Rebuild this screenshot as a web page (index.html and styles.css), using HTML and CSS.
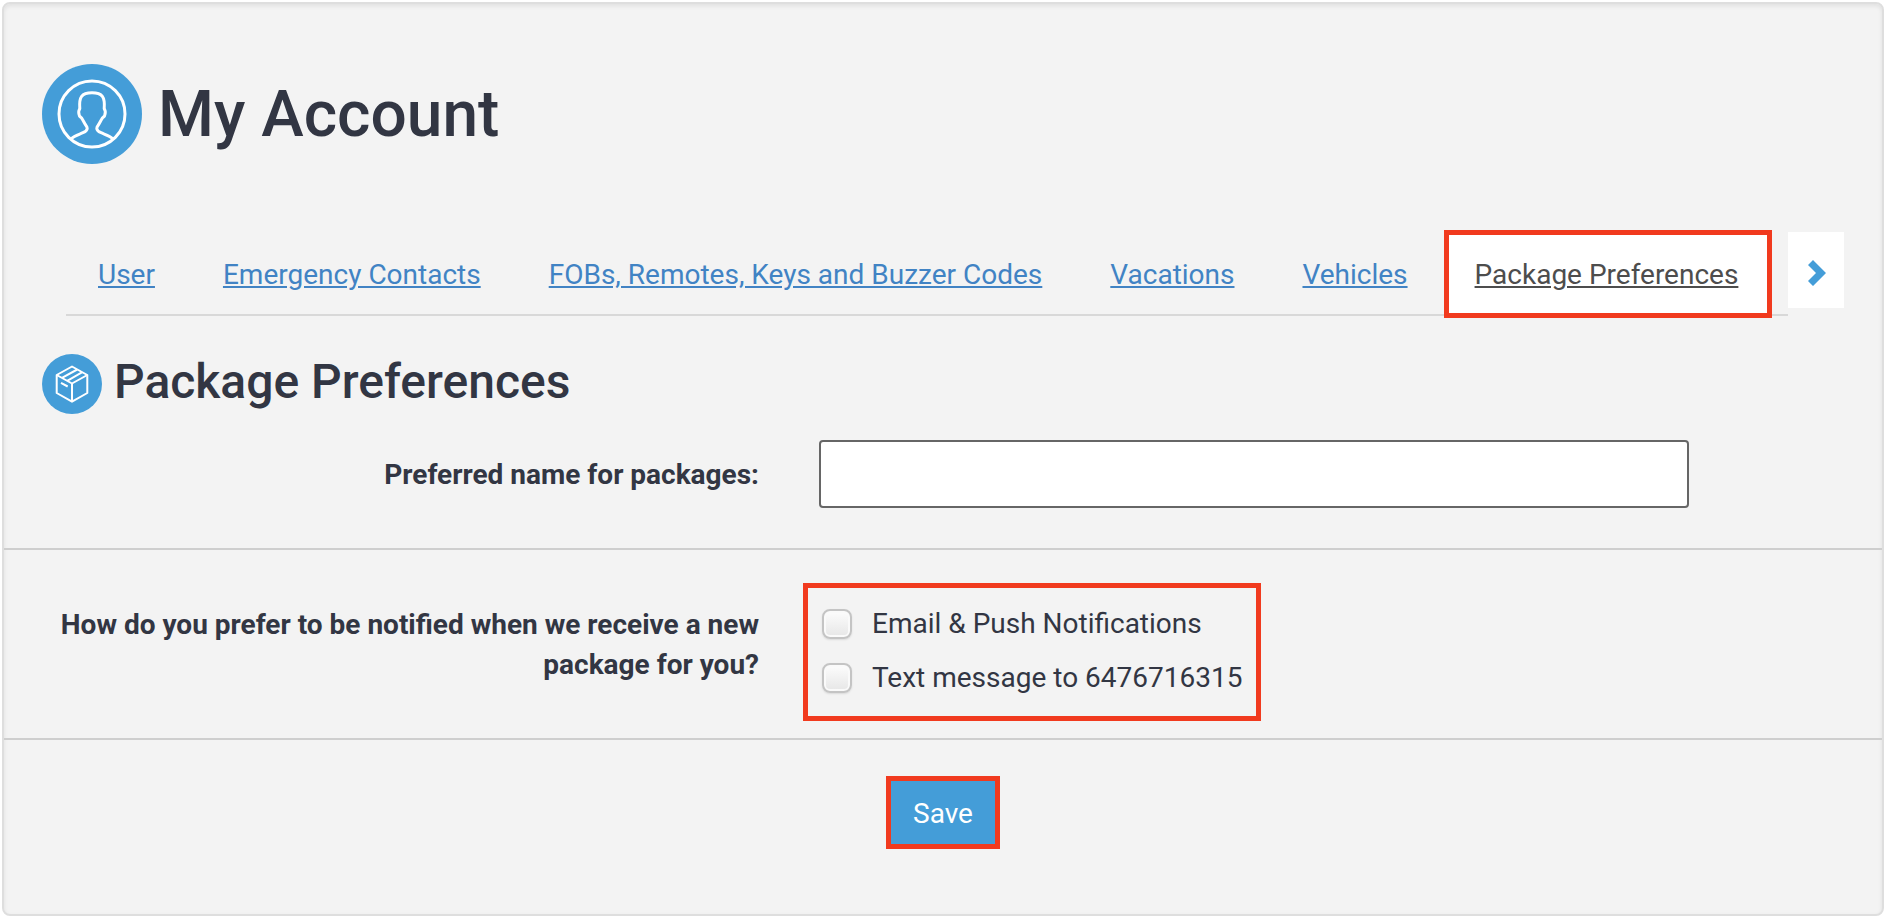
FILE: index.html
```html
<!DOCTYPE html>
<html lang="en">
<head>
  <meta charset="UTF-8">
  <title>My Account - Package Preferences</title>
  <meta name="viewport" content="width=device-width, initial-scale=1">
  <link rel="stylesheet" href="styles.css">
</head>
<body>
  <main class="panel">
    <header class="page-header">
      <svg class="icon-user" viewBox="0 0 100 100" aria-hidden="true">
        <circle class="disc" cx="50" cy="50" r="50"/>
        <g class="lines">
          <circle cx="50" cy="50" r="33"/>
          <path d="M29.500 74.500C32 72 37 70.500 41 68.700C44.500 67.200 45.200 66 45.200 64.500C45.200 63.500 44.800 62.500 44 61.500C42.500 59.500 41.300 56.500 39.500 53.800C37.800 53 36.700 50 36.700 48C36.700 46.500 37.500 45.500 37.800 44.500C36.900 33 39.500 28.800 50 28.800C60.500 28.800 63.100 33 62.200 44.500C62.500 45.500 63.300 46.500 63.300 48C63.300 50 62.200 53 60.500 53.800C58.700 56.500 57.500 59.500 56 61.500C55.200 62.500 54.800 63.500 54.800 64.500C54.800 66 55.500 67.200 59 68.700C63 70.500 68 72 70.500 74.500"/>
        </g>
      </svg>
      <h1>My Account</h1>
    </header>

    <nav class="tabs">
      <ul class="tab-list">
        <li><a href="#user">User</a></li>
        <li><a href="#emergency">Emergency Contacts</a></li>
        <li><a href="#fobs">FOBs, Remotes, Keys and Buzzer Codes</a></li>
        <li><a href="#vacations">Vacations</a></li>
        <li><a href="#vehicles">Vehicles</a></li>
        <li class="active"><a href="#packages">Package Preferences</a></li>
      </ul>
      <button class="tab-next" type="button" aria-label="Next tabs">
        <svg viewBox="0 0 18 26" aria-hidden="true"><path d="M5 0L18 13L5 26L0 21L8 13L0 5Z"/></svg>
      </button>
    </nav>

    <form id="packages">
      <div class="section-header">
        <svg class="icon-package" viewBox="0 0 60 60" aria-hidden="true">
          <circle class="disc" cx="30" cy="30" r="30"/>
          <g class="lines">
            <path d="M30 12.500L45.300 21V39L30 47.700L14.700 39V21Z"/>
            <path d="M14.700 21L30 29.500L45.300 21M30 29.500V47.700M20 23.800L35.200 15.500M25.200 26.800L40.300 18.200M19 28.800L25.700 32.500"/>
          </g>
        </svg>
        <h2>Package Preferences</h2>
      </div>

      <div class="row name-row">
        <label class="row-label" for="package-name">Preferred name for packages:</label>
        <input class="text-input" type="text" id="package-name">
      </div>

      <div class="row notify-row">
        <div class="row-label" id="notify-label">How do you prefer to be notified when we receive a new package for you?</div>
        <div class="options" role="group" aria-labelledby="notify-label">
          <label class="option"><input type="checkbox" name="email"> Email &amp; Push Notifications</label>
          <label class="option"><input type="checkbox" name="text"> Text message to 6476716315</label>
        </div>
      </div>

      <div class="actions">
        <button class="save-btn" type="submit">Save</button>
      </div>
    </form>
  </main>
</body>
</html>
```
FILE: styles.css
```css
* {
  box-sizing: border-box;
}
body {
  margin: 0;
  padding: 2px 4px 4px 2px;
  background: #fff;
  color: #323643;
  font-family: Roboto, "Liberation Sans", sans-serif;
  font-size: 28px;
  line-height: 40px;
}
h1, h2 {
  margin: 0;
  font-weight: 500;
}
.panel {
  background: #f3f3f3;
  border: 2px solid #dedede;
  border-radius: 8px;
  box-shadow: inset 0 2px 4px rgba(0, 0, 0, 0.08);
}

/* headings */
.page-header {
  display: flex;
  align-items: center;
  gap: 16px;
  padding: 60px 38px 66px;
}
h1 {
  padding-top: 2px;
  font-size: 64px;
  line-height: 80px;
}
h2 {
  font-size: 48px;
  line-height: 56px;
}
.section-header {
  display: flex;
  align-items: flex-start;
  gap: 12px;
  padding: 38px 38px 26px;
}
.icon-user {
  width: 100px;
  height: 100px;
}
.icon-package {
  width: 60px;
  height: 60px;
}
.disc {
  fill: #449dd8;
}
.lines {
  fill: none;
  stroke: #fff;
  stroke-linejoin: round;
}
.icon-user .lines {
  stroke-width: 3;
}
.icon-package .lines {
  stroke-width: 2;
}

/* tabs */
.tabs {
  display: flex;
  align-items: flex-start;
  padding: 0 38px 0 62px;
}
.tab-list {
  display: flex;
  flex: 1;
  gap: 4px;
  margin: 0;
  padding: 0;
  list-style: none;
  white-space: nowrap;
  border-bottom: 2px solid #d8d8d8;
}
.tab-list a {
  display: block;
  padding: 25px 32px 19px;
  color: #4183c4;
}
.tab-list .active {
  margin-bottom: -4px;
  background: #fff;
  border: 5px solid #f13a1e;
}
.tab-list .active a {
  padding: 20px 29px 18px 26px;
  color: #4d4d4d;
}
.tab-next {
  width: 56px;
  height: 76px;
  margin-top: 2px;
  padding: 6px 0 0 2px;
  background: #fff;
  border: 0;
  cursor: pointer;
}
.tab-next svg {
  display: block;
  width: 18px;
  height: 26px;
  margin: auto;
  fill: #449dd8;
}

/* form rows */
.row {
  display: grid;
  grid-template-columns: 5fr 6fr;
  column-gap: 60px;
  padding-left: 30px;
  padding-right: 193px;
  border-bottom: 2px solid #cecece;
}
.name-row {
  align-items: center;
  padding-bottom: 40px;
}
.notify-row {
  align-items: start;
  padding-top: 33px;
  padding-bottom: 17px;
}
.row-label {
  padding-top: 2px;
  font-weight: 700;
  text-align: right;
}
.notify-row .row-label {
  padding-top: 22px;
}
.text-input {
  width: 100%;
  height: 68px;
  padding: 0 20px;
  background: #fff;
  border: 2px solid #666;
  border-radius: 4px;
  font: inherit;
  color: inherit;
}
.options {
  width: fit-content;
  margin-left: -16px;
  padding: 9px 14px 11px;
  border: 5px solid #f13a1e;
}
.option {
  display: flex;
  align-items: center;
  gap: 20px;
  height: 54px;
}
.option input {
  appearance: none;
  width: 30px;
  height: 30px;
  margin: 0;
  background: linear-gradient(#fdfdfd, #e6e6e6);
  border: 2px solid #c4c4c4;
  border-radius: 8px;
  box-shadow: inset 0 0 0 2px #fafafa, 0 1px 2px rgba(0, 0, 0, 0.1);
}
.option input:checked {
  background: #449dd8;
}
.actions {
  padding: 36px 0 65px;
  text-align: center;
}
.save-btn {
  display: block;
  margin: 0 auto;
  padding: 13px 22px 10px;
  background: #449dd8;
  border: 5px solid #f13a1e;
  color: #fff;
  font: inherit;
  line-height: 40px;
  cursor: pointer;
}
```
